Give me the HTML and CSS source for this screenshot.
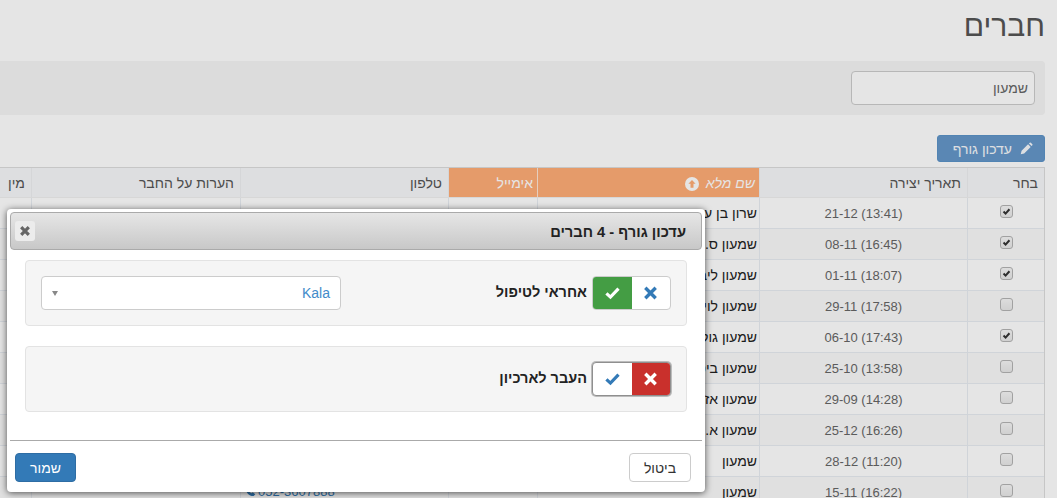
FILE: index.html
```html
<!DOCTYPE html>
<html lang="he" dir="rtl">
<head>
<meta charset="utf-8">
<title>חברים</title>
<link rel="stylesheet" href="styles.css">
</head>
<body>
<div class="page">
  <h1 class="title">חברים</h1>
  <div class="filter-panel"><input class="search" type="text" value="שמעון"></div>
  <div class="actions">
    <button class="bulk-btn" type="button">
      <svg class="pencil" viewBox="0 0 14 14"><path d="M0.8 13.2l0.9-3.7 7-7 2.8 2.8-7 7zM9.6 1.6l0.9-0.9q0.6-0.5 1.2 0l1.6 1.6q0.5 0.6 0 1.2l-0.9 0.9z" fill="currentColor"/></svg>
      <span>עדכון גורף</span>
    </button>
  </div>
  <table class="grid">
    <colgroup><col class="c1"><col class="c2"><col class="c3"><col class="c4"><col class="c5"><col class="c6"><col class="c7"></colgroup>
    <thead>
      <tr>
        <th>בחר</th><th>תאריך יצירה</th>
        <th class="sorted name-head"><span class="sort-label">שם מלא</span><svg class="sort-icon" viewBox="0 0 14 14"><circle cx="7" cy="7" r="7" fill="#fff"/><path d="M7 3l3.6 3.8h-2.1v4h-3v-4h-2.1z" fill="#ffad77"/></svg></th>
        <th class="sorted">אימייל</th><th>טלפון</th><th>הערות על החבר</th><th>מין</th>
      </tr>
    </thead>
    <tbody>
      <tr><td class="pick"><span class="box on"><svg viewBox="0 0 13 13"><path d="M3 6.6l2.4 2.4 4.6-5.2" fill="none" stroke="#333" stroke-width="2.4"/></svg></span></td><td class="date"><bdi dir="ltr">21-12 (13:41)</bdi></td><td class="name">שרון בן עזרא</td><td></td><td></td><td></td><td></td></tr>
      <tr><td class="pick"><span class="box on"><svg viewBox="0 0 13 13"><path d="M3 6.6l2.4 2.4 4.6-5.2" fill="none" stroke="#333" stroke-width="2.4"/></svg></span></td><td class="date"><bdi dir="ltr">08-11 (16:45)</bdi></td><td class="name">שמעון ס.</td><td></td><td></td><td></td><td></td></tr>
      <tr><td class="pick"><span class="box on"><svg viewBox="0 0 13 13"><path d="M3 6.6l2.4 2.4 4.6-5.2" fill="none" stroke="#333" stroke-width="2.4"/></svg></span></td><td class="date"><bdi dir="ltr">01-11 (18:07)</bdi></td><td class="name">שמעון ליברמן</td><td></td><td></td><td></td><td></td></tr>
      <tr><td class="pick"><span class="box"></span></td><td class="date"><bdi dir="ltr">29-11 (17:58)</bdi></td><td class="name">שמעון לוי</td><td></td><td></td><td></td><td></td></tr>
      <tr><td class="pick"><span class="box on"><svg viewBox="0 0 13 13"><path d="M3 6.6l2.4 2.4 4.6-5.2" fill="none" stroke="#333" stroke-width="2.4"/></svg></span></td><td class="date"><bdi dir="ltr">06-10 (17:43)</bdi></td><td class="name">שמעון גולן</td><td></td><td></td><td></td><td></td></tr>
      <tr><td class="pick"><span class="box"></span></td><td class="date"><bdi dir="ltr">25-10 (13:58)</bdi></td><td class="name">שמעון ביטון</td><td></td><td></td><td></td><td></td></tr>
      <tr><td class="pick"><span class="box"></span></td><td class="date"><bdi dir="ltr">29-09 (14:28)</bdi></td><td class="name">שמעון אזולאי</td><td></td><td></td><td></td><td></td></tr>
      <tr><td class="pick"><span class="box"></span></td><td class="date"><bdi dir="ltr">25-12 (16:26)</bdi></td><td class="name">שמעון א.</td><td></td><td></td><td></td><td></td></tr>
      <tr><td class="pick"><span class="box"></span></td><td class="date"><bdi dir="ltr">28-12 (11:20)</bdi></td><td class="name">שמעון</td><td></td><td></td><td></td><td></td></tr>
      <tr><td class="pick"><span class="box"></span></td><td class="date"><bdi dir="ltr">15-11 (16:22)</bdi></td><td class="name">שמעון</td><td></td>
        <td class="phone"><span class="phone-link" dir="ltr"><svg viewBox="0 0 12 12"><path d="M1 2.5L3 .8l2 2.6-1.2 1.2c.5 1.4 1.9 2.8 3.4 3.4L8.4 6.8 11.2 9l-1.7 2C5 11.5.5 7 1 2.5z" fill="#337ab7"/></svg>052-3607888</span></td><td></td><td></td></tr>
    </tbody>
  </table>
</div>
<div class="backdrop"></div>
<section class="modal">
  <header class="modal-head">
    <h2 class="modal-title">עדכון גורף - 4 חברים</h2>
    <button class="modal-close" type="button" aria-label="סגור"><svg viewBox="0 0 12 12"><path d="M2.2 2.2l7.6 7.6M9.8 2.2l-7.6 7.6" stroke="#666" stroke-width="3.2"/></svg></button>
  </header>
  <div class="modal-body">
    <div class="field">
      <div class="toggle">
        <span class="opt"><svg viewBox="0 0 14 14"><path d="M1.8 1.8l10.4 10.4M12.2 1.8l-10.4 10.4" stroke="#337ab7" stroke-width="3.4"/></svg></span>
        <span class="opt yes"><svg viewBox="0 0 16 14"><path d="M1.5 7.4l4.3 4L14.4 2.4" fill="none" stroke="#fff" stroke-width="3.4"/></svg></span>
      </div>
      <label class="field-label">אחראי לטיפול</label>
      <div class="select"><span class="select-value">Kala</span><span class="caret"></span></div>
    </div>
    <div class="field">
      <div class="toggle focus">
        <span class="opt no"><svg viewBox="0 0 14 14"><path d="M1.8 1.8l10.4 10.4M12.2 1.8l-10.4 10.4" stroke="#fff" stroke-width="3.4"/></svg></span>
        <span class="opt"><svg viewBox="0 0 16 14"><path d="M1.5 7.4l4.3 4L14.4 2.4" fill="none" stroke="#337ab7" stroke-width="3.4"/></svg></span>
      </div>
      <label class="field-label">העבר לארכיון</label>
    </div>
  </div>
  <footer class="modal-foot">
    <button class="btn-cancel" type="button">ביטול</button>
    <button class="btn-save" type="button">שמור</button>
  </footer>
</section>
</body>
</html>
```

FILE: styles.css
```css
html, body {
  margin: 0;
  height: 498px;
  overflow: hidden;
  background: #fff;
  font-family: "Liberation Sans", Arial, sans-serif;
  font-size: 14px;
  color: #333;
}
.page {
  width: 1057px;
  height: 498px;
  overflow: hidden;
  box-sizing: border-box;
  padding: 0 12px 0 0;
}
.title {
  margin: 0;
  padding-top: 8px;
  height: 61px;
  box-sizing: border-box;
  font-size: 30px;
  line-height: 36px;
  font-weight: 400;
  color: #555;
}
.filter-panel {
  height: 54px;
  box-sizing: border-box;
  padding: 10px 10px;
  background: #f5f5f5;
  border-radius: 4px;
  width: 1060px;
}
.search {
  display: block;
  width: 184px;
  height: 34px;
  box-sizing: border-box;
  border: 1px solid #ccc;
  border-radius: 4px;
  padding: 0 6px;
  font: 14px "Liberation Sans", Arial, sans-serif;
  color: #666;
  background: #fff;
  text-align: right;
}
.actions {
  display: flex;
  padding-top: 20px;
  height: 52px;
  box-sizing: border-box;
}
.bulk-btn {
  display: flex;
  align-items: center;
  gap: 8px;
  width: 108px;
  height: 27px;
  box-sizing: border-box;
  padding: 0 11px;
  border: 1px solid #5c93c8;
  border-radius: 3px;
  background: #6597c9;
  color: #f6f9fc;
  font: 14px "Liberation Sans", Arial, sans-serif;
}
.pencil { width: 13px; height: 13px; flex: none; }
.grid {
  width: 1106px;
  table-layout: fixed;
  border-collapse: separate;
  border-spacing: 0;
  border: 1px solid #ddd;
  border-left: 0;
  border-bottom: 0;
  font-size: 13px;
}
.c1 { width: 77px; }
.c2 { width: 208px; }
.c3 { width: 222px; }
.c4 { width: 89px; }
.c5 { width: 208px; }
.c6 { width: 209px; }
.c7 { width: 92px; }
.grid th {
  height: 30px;
  padding: 0 6px 0 8px;
  box-sizing: border-box;
  text-align: right;
  background: #f7f8fa;
  border-left: 1px solid #eeeff1;
  border-bottom: 1px solid #f0f0f0;
  font-size: 14px;
  font-weight: 400;
  color: #555;
}
.grid th.sorted {
  background: #ffad77;
  color: #fff;
  padding: 0 4px 0 0;
}
.grid th.name-head { border-left-color: #ffe6d4; }
.name-head .sort-label { font-style: italic; }
.sort-icon { width: 14px; height: 14px; vertical-align: -3px; margin-right: 7px; }
.grid td {
  height: 31px;
  padding: 0 4px;
  box-sizing: border-box;
  border-left: 1px solid #e8edf2;
  border-bottom: 1px solid #e8edf2;
  overflow: hidden;
  white-space: nowrap;
}
.grid tbody tr:nth-child(even) td { background: #fafafa; }
.date { text-align: center; color: #666; }
.grid td.name { padding-right: 2px; font-size: 14px; color: #222; }
.pick { text-align: center; }
.box {
  display: inline-block;
  width: 13px;
  height: 13px;
  box-sizing: border-box;
  border: 1px solid #b4b4b4;
  border-radius: 3px;
  background: linear-gradient(#f6f6f6, #e8e8e8);
  vertical-align: 0;
}
.box svg { display: block; width: 11px; height: 11px; }
.phone { text-align: left; }
.phone-link {
  display: inline-flex;
  align-items: center;
  gap: 2px;
  color: #337ab7;
  font-size: 13px;
}
.phone-link svg { width: 11px; height: 11px; }

.backdrop {
  position: absolute;
  inset: 0;
  width: 1057px;
  height: 498px;
  background: rgba(0, 0, 0, 0.1);
}
.modal {
  position: absolute;
  left: 7px;
  top: 209px;
  width: 698px;
  height: 283px;
  box-sizing: border-box;
  padding: 3px;
  display: flex;
  flex-direction: column;
  background: #fff;
  border-radius: 4px;
  box-shadow: 0 1px 7px rgba(0, 0, 0, 0.65);
}
.modal-head {
  display: flex;
  align-items: center;
  justify-content: space-between;
  height: 38px;
  flex: none;
  box-sizing: border-box;
  padding: 0 15px 0 4px;
  border: 1px solid #aaa;
  border-radius: 4px;
  background: linear-gradient(#e6e6e6, #c8c8c8);
}
.modal-title {
  margin: 1px 0 0;
  font-size: 14.7px;
  font-weight: 700;
  color: #222;
}
.modal-close {
  width: 20px;
  height: 20px;
  padding: 4px;
  border: 0;
  border-radius: 3px;
  background: #ececec;
  display: flex;
}
.modal-close svg { width: 12px; height: 12px; }
.modal-body {
  height: 191px;
  box-sizing: border-box;
  flex: none;
  padding: 10px 15px 0;
  display: flex;
  flex-direction: column;
  gap: 20px;
  border-bottom: 1px solid #aaa;
}
.field {
  height: 66px;
  box-sizing: border-box;
  display: flex;
  align-items: center;
  gap: 5px;
  padding: 0 15px;
  background: #f5f5f5;
  border: 1px solid #e3e3e3;
  border-radius: 4px;
}
.toggle {
  display: flex;
  width: 79px;
  height: 34px;
  box-sizing: border-box;
  border: 1px solid #ccc;
  border-radius: 4px;
  background: #fff;
  overflow: hidden;
}
.toggle.focus {
  border-color: #8f8f8f;
  box-shadow: 0 0 0 1px rgba(120, 120, 120, 0.45);
}
.opt {
  flex: 1;
  display: flex;
  align-items: center;
  justify-content: center;
}
.opt svg { width: 15px; height: 14px; }
.opt.yes { background: #449d44; }
.opt.no { background: #c9302c; }
.field-label {
  font-size: 14.5px;
  font-weight: 700;
  color: #222;
  margin-bottom: 3px;
}
.select {
  margin-right: auto;
  width: 300px;
  height: 34px;
  box-sizing: border-box;
  display: flex;
  align-items: center;
  justify-content: space-between;
  padding: 0 10px;
  background: #fff;
  border: 1px solid #ccc;
  border-radius: 4px;
}
.select-value { color: #428bca; font-size: 14px; }
.caret {
  width: 0;
  height: 0;
  border-style: solid;
  border-width: 5px 3.5px 0;
  border-color: #888 transparent transparent;
}
.modal-foot {
  display: flex;
  justify-content: space-between;
  align-items: flex-start;
  flex: 1;
  padding: 12px 11px 0 5px;
}
.btn-cancel, .btn-save {
  height: 29px;
  box-sizing: border-box;
  border-radius: 4px;
  font: 14px "Liberation Sans", Arial, sans-serif;
  padding: 0;
}
.btn-cancel {
  width: 62px;
  background: #fff;
  border: 1px solid #ccc;
  color: #333;
}
.btn-save {
  width: 61px;
  background: #337ab7;
  border: 1px solid #2e6da4;
  color: #fff;
}
```
